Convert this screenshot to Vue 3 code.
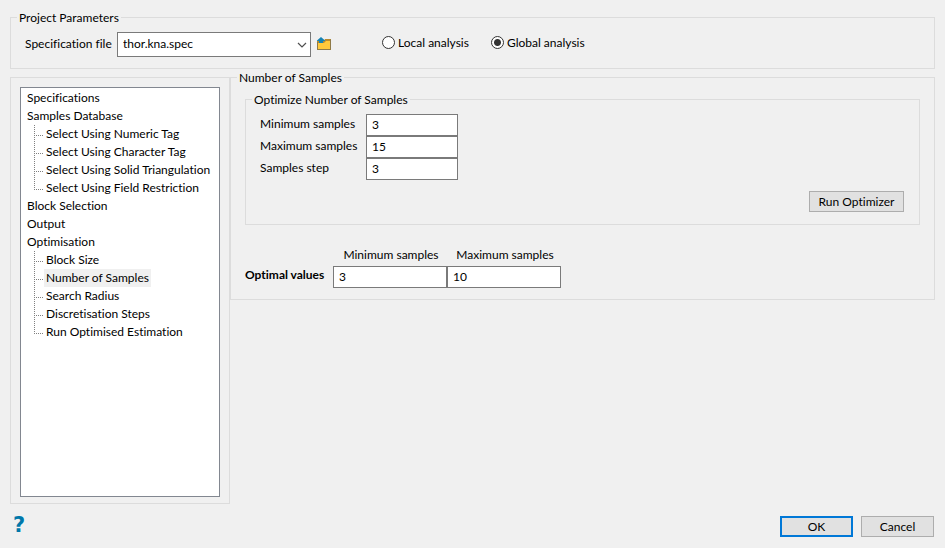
<script setup>
import { ref } from 'vue'

const specFile = ref('thor.kna.spec')
const analysis = ref('global')
const selected = ref('Number of Samples')

const tree = [
  { name: 'Specifications' },
  {
    name: 'Samples Database',
    children: [
      'Select Using Numeric Tag',
      'Select Using Character Tag',
      'Select Using Solid Triangulation',
      'Select Using Field Restriction',
    ],
  },
  { name: 'Block Selection' },
  { name: 'Output' },
  {
    name: 'Optimisation',
    children: [
      'Block Size',
      'Number of Samples',
      'Search Radius',
      'Discretisation Steps',
      'Run Optimised Estimation',
    ],
  },
]

const params = ref([
  { id: 'min-samples', label: 'Minimum samples', value: '3' },
  { id: 'max-samples', label: 'Maximum samples', value: '15' },
  { id: 'samples-step', label: 'Samples step', value: '3' },
])

const optimal = ref([
  { id: 'optimal-min', label: 'Minimum samples', value: '3' },
  { id: 'optimal-max', label: 'Maximum samples', value: '10' },
])
</script>

<template>
  <form class="dialog" @submit.prevent>
    <fieldset class="group">
      <legend>Project Parameters</legend>
      <div class="project-row">
        <label class="spec-label" for="spec-file">Specification file</label>
        <div class="combo">
          <select id="spec-file" v-model="specFile">
            <option>thor.kna.spec</option>
          </select>
          <svg class="chevron" width="10" height="6" viewBox="0 0 10 6" aria-hidden="true">
            <path d="M1 1l4 4 4-4" fill="none" stroke="#505050" stroke-width="1.2" />
          </svg>
        </div>
        <button class="browse" type="button" aria-label="Browse">
          <svg width="15" height="14" viewBox="0 0 15 14" aria-hidden="true">
            <path d="M0 4H7L8 2H14V13H0z" fill="#b98a2e" />
            <path d="M1 12V6H7L9 4H13V12z" fill="#ffc93c" />
            <path d="M.5 5V12.500H13.500V2.500" fill="none" stroke="#8f7a48" />
            <path d="M4 0L8 3.500V4H6V6H2V4H0V3.500z" fill="#1583b5" />
          </svg>
        </button>
        <div class="radios">
          <label><input v-model="analysis" type="radio" name="analysis" value="local" />Local analysis</label>
          <label><input v-model="analysis" type="radio" name="analysis" value="global" />Global analysis</label>
        </div>
      </div>
    </fieldset>

    <div class="main">
      <nav class="side">
        <ul class="tree">
          <li v-for="node in tree" :key="node.name">
            <button
              type="button"
              class="node"
              :class="{ active: selected === node.name }"
              @click="selected = node.name"
            >{{ node.name }}</button>
            <ul v-if="node.children" class="branch">
              <li v-for="child in node.children" :key="child">
                <button
                  type="button"
                  class="node"
                  :class="{ active: selected === child }"
                  @click="selected = child"
                >{{ child }}</button>
              </li>
            </ul>
          </li>
        </ul>
      </nav>

      <fieldset class="group content">
        <legend>Number of Samples</legend>
        <div class="content-body">
          <fieldset class="group">
            <legend>Optimize Number of Samples</legend>
            <div class="optimizer">
              <div class="params">
                <template v-for="p in params" :key="p.id">
                  <label :for="p.id">{{ p.label }}</label>
                  <input :id="p.id" v-model="p.value" class="field" type="text" />
                </template>
              </div>
              <button class="btn run" type="button">Run Optimizer</button>
            </div>
          </fieldset>
          <div class="optimal">
            <strong>Optimal values</strong>
            <div v-for="o in optimal" :key="o.id" class="optimal-col">
              <label :for="o.id">{{ o.label }}</label>
              <input :id="o.id" v-model="o.value" class="field" type="text" />
            </div>
          </div>
        </div>
      </fieldset>
    </div>

    <footer class="footer">
      <button class="help" type="button">?</button>
      <div class="actions">
        <button class="btn primary" type="submit">OK</button>
        <button class="btn" type="button">Cancel</button>
      </div>
    </footer>
  </form>
</template>

<style>
body {
  background: #f0f0f0;
}
</style>

<style scoped>
* {
  box-sizing: border-box;
}

.dialog {
  display: flex;
  flex-direction: column;
  min-height: 100vh;
  padding: 9px 10px 11px;
  font: 12px/18px "Segoe UI", Lato, sans-serif;
  font-variant-ligatures: none;
  color: #000;
  background: #f0f0f0;
}

button,
input,
select {
  margin: 0;
  font: inherit;
  font-variant-ligatures: none;
  color: inherit;
}

.group {
  min-width: 0;
  margin: 0;
  padding: 0 6px;
  border: 1px solid #dcdcdc;
}

legend {
  padding: 0 2px;
  line-height: 17px;
}

.project-row {
  display: flex;
  align-items: center;
  padding: 6px 0 11px 8px;
}

.spec-label {
  width: 92px;
  padding-bottom: 2px;
  white-space: nowrap;
}

.combo {
  position: relative;
  width: 194px;
}

.combo select {
  display: block;
  width: 100%;
  height: 25px;
  padding: 0 20px 2px 5px;
  border: 1px solid #7a7a7a;
  border-radius: 0;
  background: #fff;
  appearance: none;
}

.chevron {
  position: absolute;
  top: 10px;
  right: 4px;
  pointer-events: none;
}

.browse {
  display: flex;
  margin-left: 6px;
  padding: 0 0 2px;
  border: 0;
  background: none;
}

.radios {
  display: flex;
  gap: 22px;
  margin-left: 50px;
  padding-bottom: 4px;
}

.radios label {
  display: flex;
  align-items: center;
  gap: 3px;
  white-space: nowrap;
}

.radios input {
  width: 13px;
  height: 13px;
  border: 1px solid #333;
  border-radius: 50%;
  background: #fff;
  appearance: none;
}

.radios input:checked {
  background: radial-gradient(circle, #333 3px, #fff 4px);
}

.main {
  display: flex;
  flex: 1;
}

.side {
  display: flex;
  flex: 0 0 220px;
  min-width: 0;
  margin-top: 8px;
  padding: 9px 9px 6px;
  border: 1px solid #dcdcdc;
}

.tree {
  flex: 1;
  min-width: 0;
  padding: 1px 5px;
  border: 1px solid #828790;
  background: #fff;
}

ul {
  margin: 0;
  padding: 0;
  list-style: none;
}

.node {
  display: block;
  height: 18px;
  padding: 0 2px;
  border: 0;
  line-height: 18px;
  white-space: nowrap;
  background: none;
}

.node.active {
  background: #f0f0f0;
}

.tree > li > .node {
  padding: 0 1px;
}

.branch {
  margin-left: 8px;
}

.branch li {
  padding-left: 10px;
  background-image:
    repeating-linear-gradient(to bottom, #808080 0 1px, transparent 1px 2px),
    repeating-linear-gradient(to right, #808080 0 1px, transparent 1px 2px);
  background-position: 0 0, 0 10px;
  background-repeat: no-repeat;
  background-size: 1px 100%, 9px 1px;
}

.branch li:last-child {
  background-size: 1px 11px, 9px 1px;
}

.content {
  flex: 1;
  align-self: flex-start;
}

.content-body {
  padding: 5px 8px 11px;
}

.optimizer {
  display: flex;
  flex-direction: column;
  gap: 11px;
  padding: 6px 9px 12px 8px;
}

.params {
  display: grid;
  grid-template-columns: 106px 92px;
}

.params label {
  line-height: 20px;
}

.field {
  display: block;
  width: 100%;
  height: 22px;
  padding: 0 5px 2px;
  border: 1px solid #7a7a7a;
  border-radius: 0;
  background: #fff;
}

.btn {
  min-width: 73px;
  height: 21px;
  padding: 0 8px;
  border: 1px solid #adadad;
  line-height: 19px;
  background: #e1e1e1;
}

.btn.primary {
  border: 2px solid #0078d7;
  line-height: 17px;
}

.run {
  align-self: flex-end;
  width: 95px;
  padding: 0;
}

.optimal {
  display: flex;
  align-items: flex-end;
  margin-top: 21px;
}

.optimal strong {
  width: 88px;
  padding-bottom: 4px;
  white-space: nowrap;
}

.optimal-col {
  width: 114px;
}

.optimal-col label {
  display: block;
  padding: 0 0 2px 2px;
  text-align: center;
}

.footer {
  display: flex;
  align-items: center;
  justify-content: space-between;
  margin-top: 12px;
}

.help {
  height: 21px;
  padding: 0 3px 2px;
  border: 0;
  font: bold 21px/19px "DejaVu Sans", sans-serif;
  color: #0078aa;
  background: none;
}

.actions {
  display: flex;
  gap: 8px;
  padding-right: 1px;
}
</style>
